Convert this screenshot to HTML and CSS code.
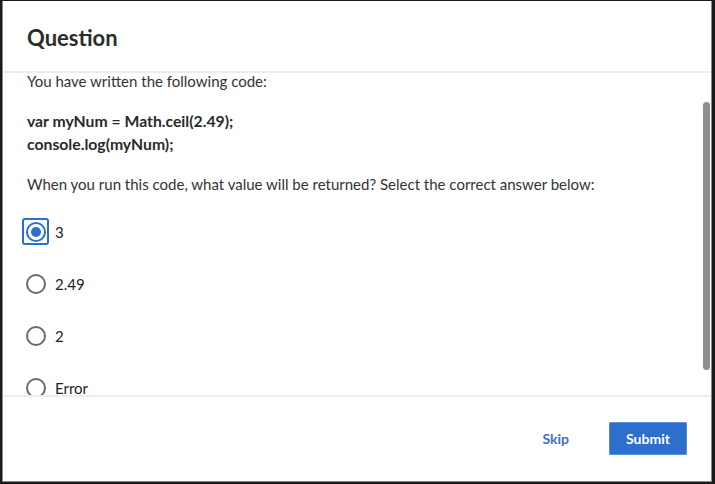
FILE: index.html
```html
<!DOCTYPE html>
<html lang="en">
<head>
<meta charset="utf-8">
<title>Question</title>
<link rel="stylesheet" href="styles.css">
</head>
<body>
<div class="dialog" role="dialog" aria-labelledby="dlg-title">
  <header class="dialog-header">
    <h1 id="dlg-title" class="dialog-title">Question</h1>
  </header>
  <div class="dialog-body">
    <div class="body-inner">
      <p class="para first">You have written the following code:</p>
      <p class="code">var myNum = Math.ceil(2.49);<br>console.log(myNum);</p>
      <p class="para">When you run this code, what value will be returned? Select the correct answer below:</p>
      <ul class="options">
        <li class="option selected"><span class="radio-focus"><span class="radio checked"></span></span><span class="opt-label">3</span></li>
        <li class="option"><span class="radio-focus"><span class="radio"></span></span><span class="opt-label">2.49</span></li>
        <li class="option"><span class="radio-focus"><span class="radio"></span></span><span class="opt-label">2</span></li>
        <li class="option"><span class="radio-focus"><span class="radio"></span></span><span class="opt-label">Error</span></li>
      </ul>
    </div>
    <div class="scroll-thumb"></div>
  </div>
  <footer class="dialog-footer">
    <button class="btn btn-link">Skip</button>
    <button class="btn btn-primary">Submit</button>
  </footer>
</div>
</body>
</html>
```
FILE: styles.css
```css
* { box-sizing: border-box; }
html, body { margin: 0; padding: 0; }
body {
  background: #1b1b1b;
  width: 715px;
  height: 484px;
  overflow: hidden;
  font-family: Lato, "Open Sans", sans-serif;
  color: #333;
}
.dialog {
  margin: 1px 3px 0 2px;
  width: 710px;
  height: 481px;
  background: #fff;
  border: 1px solid #8a8a8a;
  border-top: none;
  display: flex;
  flex-direction: column;
}
.dialog-header {
  height: 72px;
  flex: none;
  display: flex;
  align-items: center;
  padding: 0 24px;
  border-bottom: 2px solid #ececec;
}
.dialog-title {
  margin: 0;
  font-size: 22px;
  font-weight: 700;
  color: #2c2c2c;
  padding-top: 2px;
}
.dialog-body {
  position: relative;
  flex: 1;
  overflow: hidden;
  border-bottom: 2px solid #ececec;
}
.body-inner {
  padding: 0 24px;
}
.para {
  margin: 0 0 14px;
  font-size: 15px;
  line-height: 22px;
  color: #333;
}
.para.first { margin-top: -3px; margin-bottom: 17px; }
.code {
  margin: 0 0 18px;
  font-size: 15.75px;
  font-weight: 700;
  line-height: 23px;
  color: #2a2a2a;
}
.options {
  list-style: none;
  margin: 0;
  padding: 9px 0 0;
  display: flex;
  flex-direction: column;
  gap: 25px;
}
.option {
  display: flex;
  align-items: center;
  gap: 6px;
  height: 27px;
  margin-left: -5px;
}
.radio-focus {
  width: 27px;
  height: 27px;
  display: flex;
  align-items: center;
  justify-content: center;
  border: 2px solid transparent;
  border-radius: 3px;
}
.selected .radio-focus { border-color: #2d6fd0; }
.radio {
  width: 20px;
  height: 20px;
  border: 2px solid #6b6b6b;
  border-radius: 50%;
  display: flex;
  align-items: center;
  justify-content: center;
}
.radio.checked { border-color: #2d6fd0; }
.radio.checked::after {
  content: "";
  width: 10px;
  height: 10px;
  border-radius: 50%;
  background: #2d6fd0;
}
.opt-label {
  font-size: 15px;
  color: #222;
}
.scroll-thumb {
  position: absolute;
  right: 1px;
  top: 29px;
  width: 7px;
  height: 268px;
  background: #8e8e8e;
  border-radius: 4px;
}
.dialog-footer {
  flex: none;
  height: 84px;
  display: flex;
  justify-content: flex-end;
  align-items: center;
  gap: 24px;
  padding: 0 24px 2px 0;
}
.btn {
  font-family: Lato, "Open Sans", sans-serif;
  font-size: 14px;
  font-weight: 700;
  height: 33px;
  padding: 0 16px;
  border-radius: 1px;
  cursor: pointer;
}
.btn-link {
  background: none;
  border: none;
  color: #3a73c9;
}
.btn-primary {
  width: 78px;
  background: #2c6fcc;
  border: 1px solid #5b8fdc;
  color: #fff;
}
```
